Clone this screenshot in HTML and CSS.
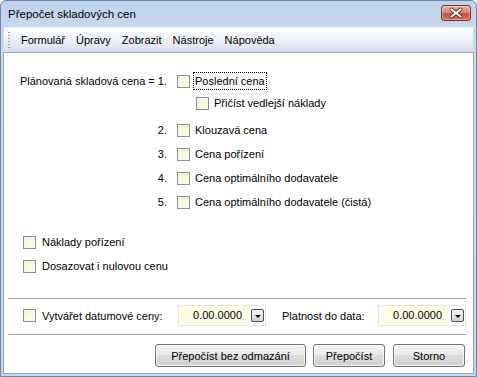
FILE: index.html
```html
<!DOCTYPE html>
<html lang="cs">
<head>
    <meta charset="UTF-8">
    <title>Přepočet skladových cen</title>
    <link rel="stylesheet" href="styles.css">
</head>
<body>
    <div class="window">
        <div class="titlebar">
            <span class="title">Přepočet skladových cen</span>
            <button class="close">
                <svg width="28" height="14" viewBox="0 0 28 14">
                    <path d="M9.5 3.5 L18.5 10.5 M18.5 3.5 L9.5 10.5" stroke="#5b3029" stroke-width="4" stroke-linecap="round"/>
                    <path d="M9.5 3.5 L18.5 10.5 M18.5 3.5 L9.5 10.5" stroke="#ffffff" stroke-width="2.2" stroke-linecap="round"/>
                </svg>
            </button>
        </div>

        <div class="menubar">
            <span class="grip"></span>
            <span class="menu-item">Formulář</span>
            <span class="menu-item">Úpravy</span>
            <span class="menu-item">Zobrazit</span>
            <span class="menu-item">Nástroje</span>
            <span class="menu-item">Nápověda</span>
        </div>

        <div class="panel">
            <div class="methods">
                <div class="method short">
                    <span class="num">Plánovaná skladová cena = 1.</span>
                    <label class="check"><span class="box"></span><span class="focus">Poslední cena</span></label>
                </div>
                <div class="method short sub">
                    <span class="num"></span>
                    <label class="check"><span class="box"></span>Přičíst vedlejší náklady</label>
                </div>
                <div class="method">
                    <span class="num">2.</span>
                    <label class="check"><span class="box"></span>Klouzavá cena</label>
                </div>
                <div class="method">
                    <span class="num">3.</span>
                    <label class="check"><span class="box"></span>Cena pořízení</label>
                </div>
                <div class="method">
                    <span class="num">4.</span>
                    <label class="check"><span class="box"></span>Cena optimálního dodavatele</label>
                </div>
                <div class="method">
                    <span class="num">5.</span>
                    <label class="check"><span class="box"></span>Cena optimálního dodavatele (čistá)</label>
                </div>
            </div>

            <div class="options">
                <label class="check option"><span class="box"></span>Náklady pořízení</label>
                <label class="check option"><span class="box"></span>Dosazovat i nulovou cenu</label>
            </div>

            <div class="dates">
                <label class="check date-check"><span class="box"></span>Vytvářet datumové ceny:</label>
                <div class="date-field">
                    <span class="date-value">0.00.0000</span>
                    <span class="drop"><span class="arrow"></span></span>
                </div>
                <span class="date-label">Platnost do data:</span>
                <div class="date-field">
                    <span class="date-value">0.00.0000</span>
                    <span class="drop"><span class="arrow"></span></span>
                </div>
            </div>

            <div class="actions">
                <button class="btn btn-wide">Přepočíst bez odmazání</button>
                <button class="btn">Přepočíst</button>
                <button class="btn btn-last">Storno</button>
            </div>
        </div>
    </div>
</body>
</html>
```

FILE: styles.css
```css
body {
    margin: 0;
    background-color: #fff;
    font-family: "Liberation Sans", Arial, sans-serif;
    font-size: 11px;
    color: #000;
}
.window {
    width: 477px;
    height: 377px;
    box-sizing: border-box;
    border: 1px solid #6f86a3;
    border-radius: 6px 6px 0 0;
    background: linear-gradient(#bfd3ea, #cadbef 40px, #c4d7ee);
    padding: 0 2px 2px 2px;
    display: flex;
    flex-direction: column;
}
.titlebar {
    height: 26px;
    display: flex;
    align-items: center;
    justify-content: space-between;
    padding: 0 3px 0 5px;
}
.title {
    font-size: 11.5px;
    color: #000;
}
.close {
    align-self: flex-start;
    margin-top: 4px;
    width: 30px;
    height: 16px;
    padding: 0;
    border: 1px solid #7b3226;
    border-radius: 3px;
    background: linear-gradient(#eab0a3, #d98a78 45%, #c6503a 55%, #d2745d);
    box-shadow: inset 0 0 0 1px rgba(255,255,255,0.35);
    display: flex;
    align-items: center;
    justify-content: center;
}
.menubar {
    height: 24px;
    margin: 0 1px 1px 1px;
    padding-left: 4px;
    display: flex;
    align-items: center;
    background: linear-gradient(#fbfcfe, #eef1f8 50%, #d9e0ef);
    border-top: 1px solid #eef3fa;
    box-sizing: border-box;
}
.grip {
    width: 2px;
    height: 18px;
    margin-right: 6px;
    background-image: radial-gradient(circle, #9aa3b5 0.8px, transparent 1px);
    background-size: 2px 3px;
}
.menu-item {
    padding: 0 5px;
    margin-right: 1px;
}
.panel {
    flex: 1;
    border: 1px solid #a4a4a4;
    background-color: #fff;
    display: flex;
    flex-direction: column;
}
.methods {
    padding-top: 17px;
}
.method {
    height: 24px;
    display: flex;
    align-items: center;
}
.method.short {
    height: 22px;
}
.method.sub {
    margin-bottom: 4px;
}
.num {
    width: 163px;
    margin-right: 10px;
    text-align: right;
}
.sub .check {
    margin-left: 19px;
}
.check {
    display: flex;
    align-items: center;
    line-height: 14px;
}
.box {
    width: 11px;
    height: 11px;
    border: 1px solid #8e8f8f;
    background: linear-gradient(135deg, #f3f3cf, #fdfde6);
    box-shadow: inset 0 0 0 1px #f4f4f0;
    margin-right: 5px;
    flex-shrink: 0;
}
.focus {
    outline: 1px dotted #000;
    outline-offset: 0;
    padding: 1px 1px;
    margin-left: -1px;
}
.options {
    margin-top: 16px;
    padding-left: 19px;
}
.option {
    height: 24px;
}
.option .box {
    margin-right: 6px;
}
.dates {
    margin: 20px 7px 0 4px;
    height: 33px;
    box-sizing: content-box;
    border-top: 1px solid #a0a0a0;
    border-bottom: 1px solid #a0a0a0;
    display: flex;
    align-items: center;
    padding: 0 0 2px 15px;
}
.date-check {
    width: 155px;
}
.date-check .box {
    margin-right: 6px;
}
.date-field {
    width: 88px;
    height: 21px;
    box-sizing: border-box;
    border: 1px solid #e2e4e6;
    display: flex;
    align-items: center;
}
.date-value {
    width: 70px;
    height: 19px;
    line-height: 19px;
    box-sizing: border-box;
    padding-right: 7px;
    text-align: right;
    background-color: #ffffe6;
}
.drop {
    width: 11px;
    height: 11px;
    margin-left: 2px;
    border: 1px solid #4e4e4e;
    border-radius: 2px;
    background: linear-gradient(#f6f6f6, #d4d4d4);
    display: flex;
    align-items: center;
    justify-content: center;
}
.arrow {
    width: 0;
    height: 0;
    margin-top: 1px;
    border-left: 3px solid transparent;
    border-right: 3px solid transparent;
    border-top: 3px solid #000;
}
.date-label {
    width: 96px;
    margin-left: 16px;
}
.actions {
    display: flex;
    justify-content: flex-end;
    padding: 9px 8px 0 0;
}
.btn {
    width: 72px;
    height: 23px;
    margin-left: 7px;
    padding: 0;
    font-family: "Liberation Sans", Arial, sans-serif;
    font-size: 11px;
    color: #000;
    border: 1px solid #707070;
    border-radius: 3px;
    background: linear-gradient(#f2f2f2, #ebebeb 45%, #dddddd 50%, #cfcfcf);
    box-shadow: inset 0 0 0 1px rgba(255,255,255,0.7);
}
.btn-wide {
    width: 151px;
}
.btn-last {
    margin-left: 8px;
}
```
